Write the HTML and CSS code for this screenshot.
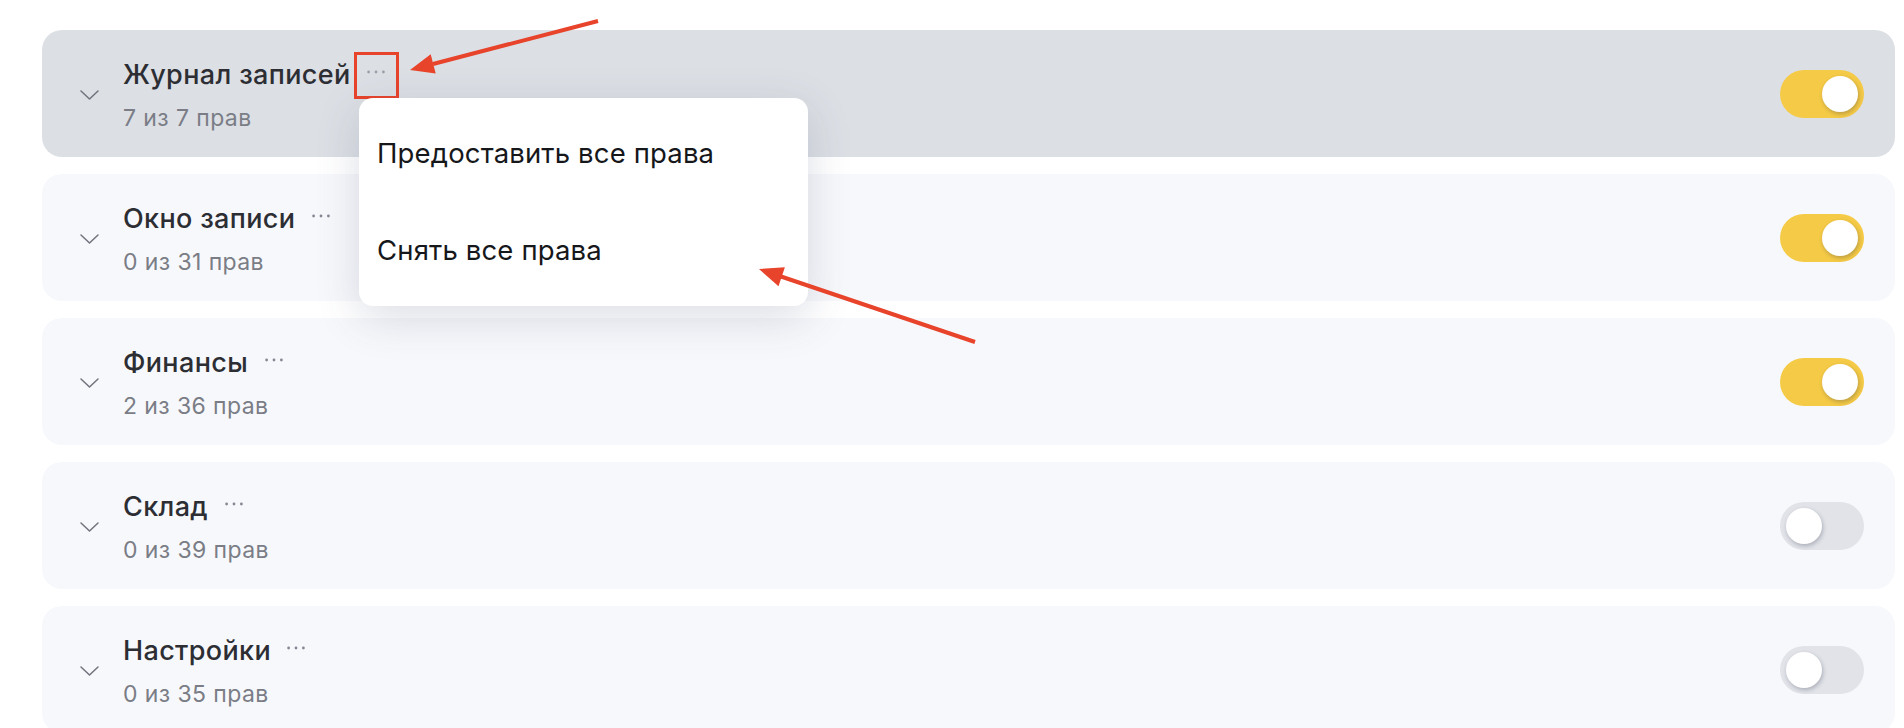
FILE: index.html
```html
<!DOCTYPE html>
<html lang="ru">
<head>
<meta charset="utf-8">
<title>Права</title>
<link rel="stylesheet" href="styles.css">
</head>
<body>
<div class="list">
  <div class="card active">
    <svg class="chev" width="19" height="10" viewBox="0 0 19 10"><path d="M1 1 L9.5 9 L18 1" /></svg>
    <div class="info">
      <div class="title-row"><span class="title">Журнал записей</span><button class="more marked"><svg width="18" height="4" viewBox="0 0 18 4"><circle cx="1.6" cy="2" r="1.4"/><circle cx="9" cy="2" r="1.4"/><circle cx="16.4" cy="2" r="1.4"/></svg></button></div>
      <div class="sub">7 из 7 прав</div>
    </div>
    <div class="toggle on"><span class="knob"></span></div>
    <div class="menu">
      <div class="menu-item">Предоставить все права</div>
      <div class="menu-item">Снять все права</div>
    </div>
  </div>
  <div class="card">
    <svg class="chev" width="19" height="10" viewBox="0 0 19 10"><path d="M1 1 L9.5 9 L18 1" /></svg>
    <div class="info">
      <div class="title-row"><span class="title">Окно записи</span><button class="more"><svg width="18" height="4" viewBox="0 0 18 4"><circle cx="1.6" cy="2" r="1.4"/><circle cx="9" cy="2" r="1.4"/><circle cx="16.4" cy="2" r="1.4"/></svg></button></div>
      <div class="sub">0 из 31 прав</div>
    </div>
    <div class="toggle on"><span class="knob"></span></div>
  </div>
  <div class="card">
    <svg class="chev" width="19" height="10" viewBox="0 0 19 10"><path d="M1 1 L9.5 9 L18 1" /></svg>
    <div class="info">
      <div class="title-row"><span class="title">Финансы</span><button class="more"><svg width="18" height="4" viewBox="0 0 18 4"><circle cx="1.6" cy="2" r="1.4"/><circle cx="9" cy="2" r="1.4"/><circle cx="16.4" cy="2" r="1.4"/></svg></button></div>
      <div class="sub">2 из 36 прав</div>
    </div>
    <div class="toggle on"><span class="knob"></span></div>
  </div>
  <div class="card">
    <svg class="chev" width="19" height="10" viewBox="0 0 19 10"><path d="M1 1 L9.5 9 L18 1" /></svg>
    <div class="info">
      <div class="title-row"><span class="title">Склад</span><button class="more"><svg width="18" height="4" viewBox="0 0 18 4"><circle cx="1.6" cy="2" r="1.4"/><circle cx="9" cy="2" r="1.4"/><circle cx="16.4" cy="2" r="1.4"/></svg></button></div>
      <div class="sub">0 из 39 прав</div>
    </div>
    <div class="toggle"><span class="knob"></span></div>
  </div>
  <div class="card">
    <svg class="chev" width="19" height="10" viewBox="0 0 19 10"><path d="M1 1 L9.5 9 L18 1" /></svg>
    <div class="info">
      <div class="title-row"><span class="title">Настройки</span><button class="more"><svg width="18" height="4" viewBox="0 0 18 4"><circle cx="1.6" cy="2" r="1.4"/><circle cx="9" cy="2" r="1.4"/><circle cx="16.4" cy="2" r="1.4"/></svg></button></div>
      <div class="sub">0 из 35 прав</div>
    </div>
    <div class="toggle"><span class="knob"></span></div>
  </div>
</div>
<svg class="annot" width="1904" height="728" viewBox="0 0 1904 728">
  <line x1="598" y1="21" x2="433" y2="64" />
  <polygon points="410,70 435.7,73.6 430.7,54.3" />
  <line x1="975" y1="342" x2="781" y2="276.5" />
  <polygon points="759,269 784.9,267.2 778.5,286.2" />
</svg>
</body>
</html>
```
FILE: styles.css
```css
html, body {
  margin: 0;
  padding: 0;
  background: #ffffff;
  width: 1904px;
  height: 728px;
  overflow: hidden;
  font-family: Inter, "Noto Sans", "Liberation Sans", sans-serif;
}

.list {
  display: flex;
  flex-direction: column;
  gap: 17px;
  padding: 30px 9px 0 42px;
}

.card {
  position: relative;
  flex: 0 0 127px;
  height: 127px;
  box-sizing: border-box;
  border-radius: 20px;
  background: #f7f8fb;
  display: flex;
  align-items: center;
  padding: 0 31px 0 38px;
}

.card.active {
  background: #dcdfe4;
  z-index: 2;
}

.chev {
  flex: none;
  margin-top: 2px;
  fill: none;
  stroke: #70737c;
  stroke-width: 1.5;
  stroke-linecap: round;
  stroke-linejoin: round;
}

.info {
  flex: 1;
  margin-left: 24px;
  padding-top: 3px;
  display: flex;
  flex-direction: column;
  gap: 14px;
}

.title-row {
  display: flex;
  align-items: center;
  height: 32px;
}

.title {
  font-size: 27px;
  line-height: 32px;
  font-weight: 500;
  color: #2c2e33;
  letter-spacing: 0.35px;
}

.more {
  margin-left: 6px;
  width: 39px;
  height: 41px;
  padding: 0;
  border: 0;
  background: transparent;
  display: flex;
  align-items: center;
  justify-content: center;
  padding-bottom: 6px;
  box-sizing: border-box;
  fill: #858892;
}

.card.active .more {
  fill: #9ea1aa;
}

.more.marked {
  outline: 3px solid #e8432b;
}

.sub {
  font-size: 23px;
  line-height: 26px;
  color: #7a7d86;
  letter-spacing: 0.4px;
}

.toggle {
  flex: none;
  position: relative;
  width: 84px;
  height: 48px;
  border-radius: 24px;
  background: #e1e3e9;
}

.toggle.on {
  background: #f5ca46;
}

.knob {
  position: absolute;
  top: 6px;
  left: 6px;
  width: 36px;
  height: 36px;
  border-radius: 50%;
  background: #ffffff;
  box-shadow: 1px 2px 4px rgba(40, 40, 60, 0.28);
}

.toggle.on .knob {
  left: 42px;
}

.menu {
  position: absolute;
  left: 317px;
  top: 68px;
  width: 449px;
  height: 208px;
  box-sizing: border-box;
  padding: 38px 18px 0;
  background: #ffffff;
  border-radius: 14px;
  box-shadow: 0 12px 44px rgba(60, 70, 110, 0.18);
  display: flex;
  flex-direction: column;
  gap: 63px;
}

.menu-item {
  font-size: 27.5px;
  line-height: 34px;
  color: #16171a;
  letter-spacing: 0.15px;
}

.annot {
  position: absolute;
  left: 0;
  top: 0;
  z-index: 10;
  pointer-events: none;
}

.annot line {
  stroke: #e8432b;
  stroke-width: 4;
}

.annot polygon {
  fill: #e8432b;
}
```
